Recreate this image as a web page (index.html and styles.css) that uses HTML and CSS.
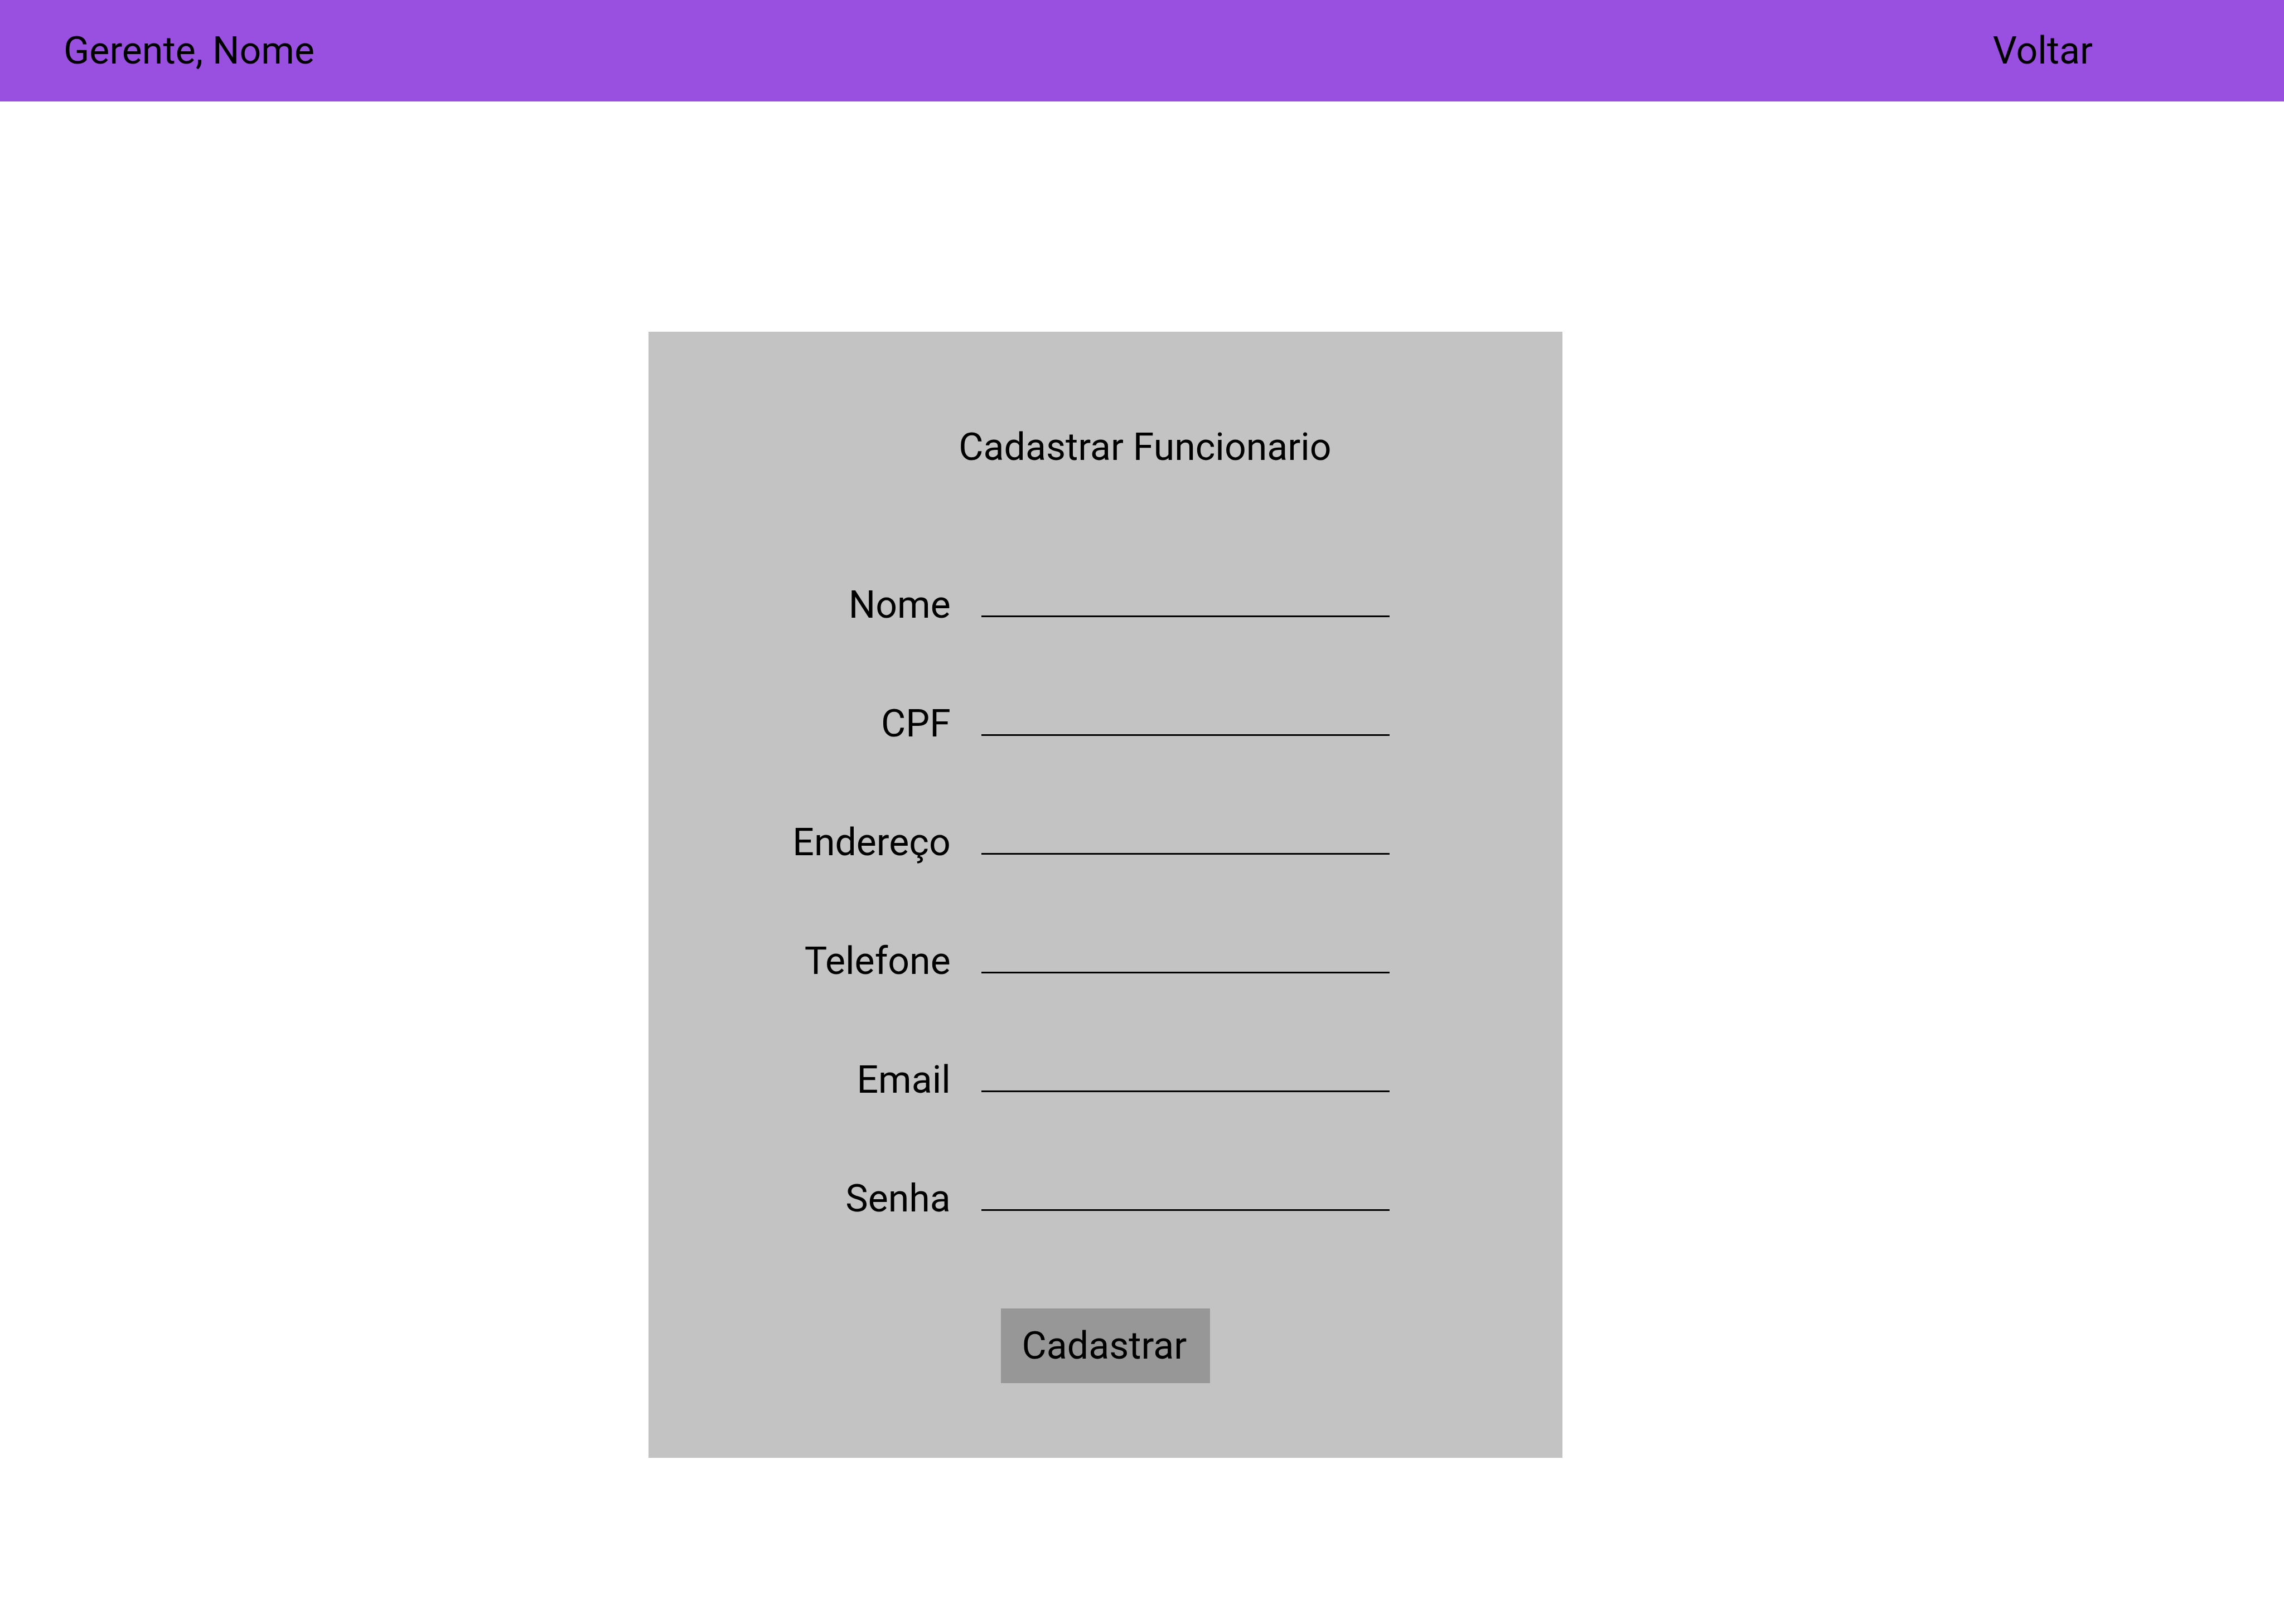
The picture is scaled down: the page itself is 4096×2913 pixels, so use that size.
FILE: index.html
```html
<!DOCTYPE html>
<html lang="pt-BR">
<head>
  <meta charset="utf-8">
  <meta name="viewport" content="width=device-width, initial-scale=1">
  <title>Cadastrar Funcionario</title>
  <link rel="stylesheet" href="styles.css">
</head>
<body>
  <header class="topbar">
    <span class="topbar-user">Gerente, Nome</span>
    <a class="topbar-back" href="#">Voltar</a>
  </header>
  <main class="page">
    <form class="card">
      <h1 class="card-title">Cadastrar Funcionario</h1>
      <div class="fields">
        <label class="field-label" for="nome">Nome</label>
        <input class="field-input" id="nome" name="nome" type="text">
        <label class="field-label" for="cpf">CPF</label>
        <input class="field-input" id="cpf" name="cpf" type="text">
        <label class="field-label" for="endereco">Endereço</label>
        <input class="field-input" id="endereco" name="endereco" type="text">
        <label class="field-label" for="telefone">Telefone</label>
        <input class="field-input" id="telefone" name="telefone" type="tel">
        <label class="field-label" for="email">Email</label>
        <input class="field-input" id="email" name="email" type="email">
        <label class="field-label" for="senha">Senha</label>
        <input class="field-input" id="senha" name="senha" type="password">
      </div>
      <button class="submit" type="submit">Cadastrar</button>
    </form>
  </main>
</body>
</html>
```
FILE: styles.css
```css
* {
  box-sizing: border-box;
}

body {
  margin: 0;
  background: #ffffff;
  color: #000000;
  font-family: Roboto, "Liberation Sans", sans-serif;
  font-size: 68px;
  line-height: 80px;
}

.topbar {
  display: flex;
  justify-content: space-between;
  align-items: center;
  padding: 51px 343px 51px 114px;
  background: #994fdf;
}

.topbar-back {
  color: inherit;
  text-decoration: none;
}

.page {
  padding: 413px 0 299px;
}

.card {
  display: flex;
  flex-direction: column;
  width: 40%;
  margin-left: 28.4%;
  padding: 167px 0 134px;
  background: #c3c3c3;
}

.card-title {
  margin: 0 0 203px;
  padding-left: 142px;
  font-size: 68px;
  font-weight: 400;
  text-align: center;
}

.fields {
  display: grid;
  grid-template-columns: auto 1fr;
  gap: 133px 55px;
  padding: 0 310px 0 258px;
}

.field-label {
  text-align: right;
}

/* The underline sits on the label's baseline. */
.field-input {
  width: 100%;
  height: 62px;
  padding: 0;
  border: 0;
  border-bottom: 3px solid #000000;
  border-radius: 0;
  background: transparent;
  color: inherit;
  font-family: inherit;
  font-size: 48px;
  outline: none;
}

.field-input:focus {
  border-bottom-color: #994fdf;
}

.submit {
  align-self: center;
  margin-top: 157px;
  padding: 27px 42px 27px 38px;
  border: 0;
  background: #979797;
  color: inherit;
  font: inherit;
  cursor: pointer;
}
```
